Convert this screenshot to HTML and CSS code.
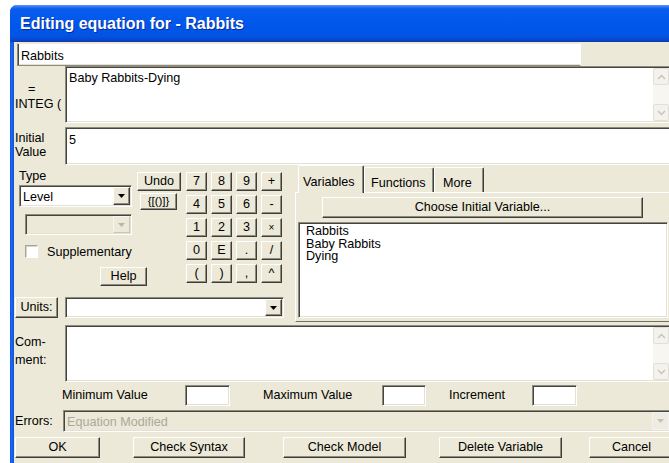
FILE: index.html
```html
<!DOCTYPE html>
<html>
<head>
<meta charset="utf-8">
<title>Editing equation for - Rabbits</title>
<link rel="stylesheet" href="styles.css">
</head>
<body>
<div class="window">
  <div class="titlebar"><span class="title">Editing equation for - Rabbits</span></div>
  <div class="frame">
    <div class="client">

      <div class="row row-name">
        <div class="edit name-field">Rabbits</div>
      </div>

      <div class="row row-eq">
        <div class="side-label eq-label"><span class="eq-sign">=</span><span>INTEG (</span></div>
        <div class="edit memo eq-memo">
          <div class="memo-text">Baby Rabbits-Dying</div>
          <div class="vscroll">
            <span class="sb-btn"><svg width="9" height="6" viewBox="0 0 9 6"><path d="M1 5l3.5-3.5L8 5" fill="none" stroke="#c8c6bb" stroke-width="1.5"/></svg></span>
            <span class="sb-btn"><svg width="9" height="6" viewBox="0 0 9 6"><path d="M1 1l3.5 3.5L8 1" fill="none" stroke="#c8c6bb" stroke-width="1.5"/></svg></span>
          </div>
        </div>
      </div>

      <div class="row row-init">
        <div class="side-label init-label">Initial<br>Value</div>
        <div class="edit memo init-memo"><div class="memo-text init-text">5</div></div>
      </div>

      <div class="mid">
        <div class="mid-left">
          <div class="top-area">
            <div class="left-stack">
              <div class="type-tools">
                <div class="type-col">
                  <div class="type-label">Type</div>
                  <div class="combo level-combo">
                    <span class="combo-text">Level</span>
                    <span class="combo-btn"><svg width="7" height="4" viewBox="0 0 7 4"><path d="M0 0h7L3.5 4z" fill="#000"/></svg></span>
                  </div>
                  <div class="combo combo-off sub-combo">
                    <span class="combo-text"></span>
                    <span class="combo-btn"><svg width="7" height="4" viewBox="0 0 7 4"><path d="M0 0h7L3.5 4z" fill="#b9b6a8"/></svg></span>
                  </div>
                </div>
                <div class="tools-col">
                  <button class="btn undo-btn">Undo</button>
                  <button class="btn brace-btn">{[()]}</button>
                </div>
              </div>
              <div class="check-row">
                <span class="checkbox"></span>
                <span class="check-text">Supplementary</span>
              </div>
              <div class="help-row">
                <button class="btn help-btn">Help</button>
              </div>
            </div>
            <div class="keypad">
              <button class="btn key">7</button>
              <button class="btn key">8</button>
              <button class="btn key">9</button>
              <button class="btn key">+</button>
              <button class="btn key">4</button>
              <button class="btn key">5</button>
              <button class="btn key">6</button>
              <button class="btn key">-</button>
              <button class="btn key">1</button>
              <button class="btn key">2</button>
              <button class="btn key">3</button>
              <button class="btn key key-small">×</button>
              <button class="btn key">0</button>
              <button class="btn key">E</button>
              <button class="btn key">.</button>
              <button class="btn key">/</button>
              <button class="btn key">(</button>
              <button class="btn key">)</button>
              <button class="btn key">,</button>
              <button class="btn key">^</button>
            </div>
          </div>
          <div class="units-row">
            <button class="btn units-btn">Units:</button>
            <div class="combo units-combo">
              <span class="combo-text"></span>
              <span class="combo-btn"><svg width="7" height="4" viewBox="0 0 7 4"><path d="M0 0h7L3.5 4z" fill="#000"/></svg></span>
            </div>
          </div>
        </div>

        <div class="tabctl">
          <div class="tabstrip">
            <span class="tab tab-on tab-vars">Variables</span>
            <span class="tab tab-funcs">Functions</span>
            <span class="tab tab-more">More</span>
          </div>
          <div class="tabpanel">
            <button class="btn choose-btn">Choose Initial Variable...</button>
            <div class="edit listbox">
              <div>Rabbits</div>
              <div>Baby Rabbits</div>
              <div>Dying</div>
            </div>
          </div>
        </div>
      </div>

      <div class="row row-comment">
        <div class="side-label comment-label">Com-<br>ment:</div>
        <div class="edit memo comment-memo">
          <div class="memo-text"></div>
          <div class="vscroll">
            <span class="sb-btn"><svg width="9" height="6" viewBox="0 0 9 6"><path d="M1 5l3.5-3.5L8 5" fill="none" stroke="#c8c6bb" stroke-width="1.5"/></svg></span>
            <span class="sb-btn"><svg width="9" height="6" viewBox="0 0 9 6"><path d="M1 1l3.5 3.5L8 1" fill="none" stroke="#c8c6bb" stroke-width="1.5"/></svg></span>
          </div>
        </div>
      </div>

      <div class="row row-range">
        <span class="range-label range-min">Minimum Value</span>
        <div class="edit range-field"></div>
        <span class="range-label range-max">Maximum Value</span>
        <div class="edit range-field range-field-max"></div>
        <span class="range-label range-inc">Increment</span>
        <div class="edit range-field"></div>
      </div>

      <div class="row row-errors">
        <div class="side-label errors-label">Errors:</div>
        <div class="combo combo-off errors-combo">
          <span class="combo-text">Equation Modified</span>
          <span class="combo-btn flat-btn"><svg width="7" height="4" viewBox="0 0 7 4"><path d="M0 0h7L3.5 4z" fill="#c4c1b4"/></svg></span>
        </div>
      </div>

      <div class="row row-buttons">
        <button class="btn action ok-btn">OK</button>
        <button class="btn action syntax-btn">Check Syntax</button>
        <button class="btn action model-btn">Check Model</button>
        <button class="btn action delete-btn">Delete Variable</button>
        <button class="btn action cancel-btn">Cancel</button>
      </div>

    </div>
  </div>
</div>
</body>
</html>
```

FILE: styles.css
```css
* { box-sizing: border-box; }

html, body { margin: 0; padding: 0; }

body {
  width: 669px;
  height: 463px;
  overflow: hidden;
  background: #ffffff;
  font-family: "Liberation Sans", Arial, sans-serif;
  font-size: 12.6px;
  color: #000;
}

/* ---- window frame ---- */
.window {
  width: 672px;
  height: 480px;
  margin: 5px 0 0 10px;
  border-radius: 7px 0 0 0;
  overflow: hidden;
  display: flex;
  flex-direction: column;
  background: #0b52de;
}

.titlebar {
  flex: none;
  height: 37px;
  padding: 1px 0 0 10px;
  line-height: 36px;
  background: linear-gradient(to bottom,
    #5b9cf8 0, #2a72f2 2px, #0a5cee 4px, #0058ec 45%, #0054e5 85%, #0c44c4 95%, #0a3aa8 100%);
  color: #fff;
  font-size: 16px;
  font-weight: bold;
  text-shadow: 1px 1px 0 #0b2a9a;
  white-space: nowrap;
}

.frame {
  flex: 1;
  display: flex;
  padding-left: 4px;
  background: linear-gradient(to right, #0a45cf 0, #1b6cf2 1px, #0f5ce8 3px, #0b52de 4px);
}

.client {
  flex: 1;
  display: flex;
  flex-direction: column;
  background: #ece9d8;
}

.row { display: flex; flex: none; }

/* ---- shared controls ---- */
.edit {
  background: #fff;
  border: 1px solid;
  border-color: #8d8b80 #ffffff #ffffff #8d8b80;
  box-shadow: inset 1px 1px 0 #45443d, inset -1px -1px 0 #e4e1d2;
}

.btn {
  margin: 0;
  padding: 0;
  font-family: inherit;
  font-size: inherit;
  color: #000;
  background: #ece9d8;
  border: 1px solid;
  border-color: #ffffff #3f3e38 #3f3e38 #ffffff;
  box-shadow: inset -1px -1px 0 #8e8c80;
  border-radius: 0;
  text-align: center;
  line-height: 1;
}

.side-label {
  flex: none;
  width: 51px;
  padding-left: 1px;
  line-height: 14px;
}

/* ---- name ---- */
.row-name {
  height: 24px;
  padding: 1px 0 0 3px;
}

.name-field {
  width: 564px;
  height: 23px;
  padding: 5px 0 0 3px;
  border-top-color: #ece9d8;
  box-shadow: inset 1px 0 0 #45443d, inset 0 -1px 0 #e4e1d2;
  border-bottom-color: #8d8b80;
}

/* ---- memo boxes ---- */
.memo {
  display: flex;
  width: 606px;
}

.memo-text {
  flex: 1;
  padding: 4px 0 0 3px;
}

.init-text { padding-top: 5px; }

.vscroll {
  flex: none;
  width: 16px;
  margin: 1px 1px 1px 0;
  display: flex;
  flex-direction: column;
  justify-content: space-between;
  background: #f7f6f1;
}

.sb-btn {
  height: 17px;
  display: flex;
  align-items: center;
  justify-content: center;
  background: #f3f2ec;
  border: 1px solid #e2e0d6;
  border-radius: 2px;
}

.row-eq { height: 57px; }

.eq-label {
  display: flex;
  flex-direction: column;
  justify-content: flex-end;
  padding-bottom: 11px;
  line-height: 15px;
}

.eq-sign { padding-left: 13px; }

.row-init {
  height: 38px;
  margin-top: 4px;
}

.init-label { padding-top: 4px; }

/* ---- middle block ---- */
.mid {
  flex: none;
  display: flex;
  height: 157px;
}

.mid-left {
  flex: none;
  width: 281px;
  display: flex;
  flex-direction: column;
}

.top-area {
  height: 130px;
  display: flex;
  padding: 5px 0 0 5px;
}

.left-stack {
  width: 167px;
  display: flex;
  flex-direction: column;
}

.type-tools { display: flex; height: 65px; }

.type-col { width: 113px; }

.type-label {
  height: 15px;
  line-height: 12px;
}

.combo {
  display: flex;
  background: #fff;
  border: 1px solid;
  border-color: #8d8b80 #ffffff #ffffff #8d8b80;
  box-shadow: inset 1px 1px 0 #45443d, inset -1px -1px 0 #e4e1d2;
  padding: 1px;
}

.combo-text {
  flex: 1;
  padding: 3px 0 0 2px;
  white-space: nowrap;
}

.combo-btn {
  flex: none;
  width: 17px;
  display: flex;
  align-items: center;
  justify-content: center;
  background: #ece9d8;
  border: 1px solid;
  border-color: #ffffff #3f3e38 #3f3e38 #ffffff;
  box-shadow: inset -1px -1px 0 #8e8c80;
}

.level-combo { height: 22px; }

.combo-off { background: #ece9d8; }

.sub-combo {
  width: 107px;
  height: 21px;
  margin: 7px 0 0 6px;
}

.sub-combo .combo-btn {
  border-color: #f6f5ef #c9c6b8 #c9c6b8 #f6f5ef;
  box-shadow: none;
}

.tools-col {
  margin-left: 5px;
  padding-top: 2px;
  display: flex;
  flex-direction: column;
}

.undo-btn { width: 44px; height: 19px; }

.brace-btn {
  width: 37px;
  height: 17px;
  margin: 2px 0 0 3px;
  font-size: 11.5px;
}

.check-row {
  display: flex;
  align-items: center;
  height: 13px;
  margin-top: 10px;
}

.checkbox {
  width: 13px;
  height: 13px;
  margin-left: 6px;
  background: #fff;
  border: 1px solid;
  border-color: #a7a597 #ffffff #ffffff #a7a597;
  box-shadow: inset 1px 1px 0 #d8d5c7;
}

.check-text { margin-left: 9px; }

.help-row { margin-top: 9px; }

.help-btn {
  width: 47px;
  height: 19px;
  margin-left: 81px;
}

.keypad {
  margin-top: 2px;
  display: grid;
  grid-template-columns: repeat(4, 21px);
  grid-template-rows: repeat(5, 19px);
  column-gap: 4px;
  row-gap: 4px;
}

.key { width: 21px; height: 19px; }

.key-small { font-size: 10px; }

.units-row {
  display: flex;
  height: 21px;
  margin-top: 2px;
}

.units-btn {
  width: 43px;
  height: 21px;
  margin-left: 1px;
}

.units-combo {
  width: 219px;
  height: 21px;
  margin-left: 7px;
}

/* ---- tab control ---- */
.tabctl {
  flex: none;
  width: 385px;
  display: flex;
  flex-direction: column;
}

.tabstrip {
  height: 27px;
  display: flex;
  align-items: flex-end;
  padding-left: 3px;
  position: relative;
  z-index: 1;
}

.tab {
  height: 25px;
  padding-top: 9px;
  line-height: 12px;
  background: #ece9d8;
  border-left: 1px solid #ffffff;
  border-top: 1px solid #ffffff;
  border-right: 1px solid #3f3e38;
  box-shadow: inset -1px 0 0 #8e8c80;
  border-radius: 2px 2px 0 0;
  white-space: nowrap;
}

.tab-on {
  height: 28px;
  margin-bottom: -1px;
  padding-top: 10px;
}

.tab-vars { width: 66px; padding-left: 4px; }
.tab-funcs { width: 70px; padding-left: 6px; }
.tab-more { width: 50px; padding-left: 8px; }

.tabpanel {
  flex: 1;
  border-top: 1px solid #ffffff;
  border-left: 1px solid #ffffff;
  border-bottom: 1px solid #716f64;
  padding: 4px 0 0 2px;
}

.choose-btn {
  display: block;
  width: 321px;
  height: 21px;
  margin-left: 24px;
}

.listbox {
  width: 370px;
  height: 96px;
  margin-top: 4px;
  padding: 2px 0 0 7px;
  line-height: 12.5px;
}

/* ---- comment ---- */
.row-comment {
  height: 57px;
  margin-top: 3px;
}

.comment-label { padding-top: 8px; line-height: 18px; }

/* ---- range ---- */
.row-range {
  height: 21px;
  margin-top: 3px;
  line-height: 21px;
}

.range-label { flex: none; white-space: nowrap; }

.range-min { width: 171px; padding-left: 48px; }
.range-max { width: 152px; padding-left: 33px; }
.range-inc { width: 106px; padding-left: 23px; }

.range-field { width: 45px; height: 21px; }
.range-field-max { width: 44px; }

/* ---- errors ---- */
.row-errors {
  height: 22px;
  margin-top: 4px;
}

.errors-label {
  width: 49px;
  line-height: 22px;
}

.errors-combo {
  width: 608px;
  height: 22px;
  color: #aca899;
}

.flat-btn {
  border-color: #f3f2ec;
  box-shadow: none;
  background: #eeece2;
}

/* ---- action buttons ---- */
.row-buttons {
  height: 21px;
  margin-top: 5px;
}

.action { height: 21px; }

.ok-btn { width: 85px; margin-left: 1px; }
.syntax-btn { width: 112px; margin-left: 33px; }
.model-btn { width: 123px; margin-left: 38px; }
.delete-btn { width: 123px; margin-left: 33px; }
.cancel-btn { width: 85px; margin-left: 27px; }
```
